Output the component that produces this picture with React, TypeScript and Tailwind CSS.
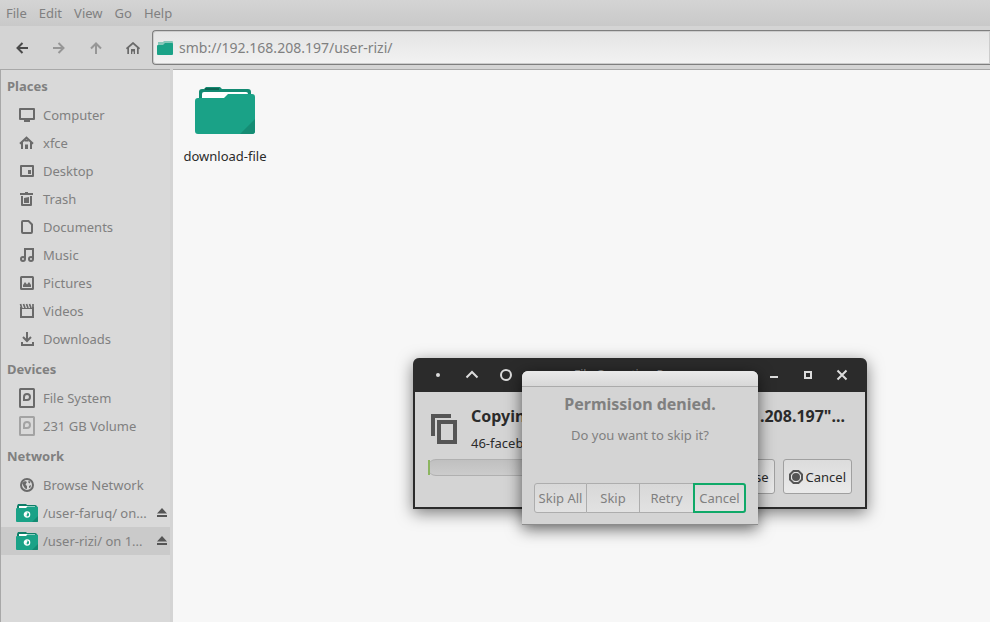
import type { ReactNode } from "react";

function Computer() {
  return (
    <svg width="16" height="16" viewBox="0 0 16 16" fill="currentColor" aria-hidden="true">
      <path fillRule="evenodd" d="M1 1h14a1 1 0 0 1 1 1v10a1 1 0 0 1-1 1H1a1 1 0 0 1-1-1V2a1 1 0 0 1 1-1zM2 3v8h12V3z" />
      <path d="M5 13h6v2H5z" />
    </svg>
  );
}
function Home() {
  return (
    <svg width="16" height="16" viewBox="0 0 16 16" aria-hidden="true">
      <path d="M1 8.700 7.500 2.600l6.500 6.100" fill="none" stroke="currentColor" strokeWidth="2" />
      <path d="M2 14V7h2v7zM11 14V7h2v7zM6 14V9.500h3V14zM5.500 4.500h4v2h-4z" fill="currentColor" />
    </svg>
  );
}
function Desktop() {
  return (
    <svg width="16" height="16" viewBox="0 0 16 16" fill="currentColor" aria-hidden="true">
      <path fillRule="evenodd" d="M2 2h12a1 1 0 0 1 1 1v10a1 1 0 0 1-1 1H2a1 1 0 0 1-1-1V3a1 1 0 0 1 1-1zM3 4v8h10V4z" />
      <path d="M9 7h3v4H9z" />
    </svg>
  );
}
function Trash() {
  return (
    <svg width="16" height="16" viewBox="0 0 16 16" fill="currentColor" aria-hidden="true">
      <path d="M6 1h3v1h5v2H1V2h5z" />
      <path fillRule="evenodd" d="M2 5h11v9a1 1 0 0 1-1 1H3a1 1 0 0 1-1-1zM4 5v8h7V5z" />
      <path d="M5 7l5-1v6H5z" />
    </svg>
  );
}
function Doc() {
  return (
    <svg width="16" height="16" viewBox="0 0 16 16" fill="none" stroke="currentColor" strokeWidth="2" aria-hidden="true">
      <path d="M4 2h5.500L13 5.500V13a1 1 0 0 1-1 1H4a1 1 0 0 1-1-1V3a1 1 0 0 1 1-1z" />
    </svg>
  );
}
function Music() {
  return (
    <svg width="16" height="16" viewBox="0 0 16 16" fill="none" stroke="currentColor" strokeWidth="2" aria-hidden="true">
      <path d="M6 12V2h8v10" />
      <circle cx="4" cy="12" r="2" />
      <circle cx="12" cy="12" r="2" />
    </svg>
  );
}
function Picture() {
  return (
    <svg width="16" height="16" viewBox="0 0 16 16" aria-hidden="true">
      <rect x="2" y="2" width="12" height="12" rx="0.500" fill="none" stroke="currentColor" strokeWidth="2" />
      <path d="M4 12V10l2-3 2 2.500L10 7l2 3v2z" fill="currentColor" />
    </svg>
  );
}
function Video() {
  return (
    <svg width="16" height="16" viewBox="0 0 16 16" aria-hidden="true">
      <path d="M2 4v10h12V4" fill="none" stroke="currentColor" strokeWidth="2" />
      <path d="M1 5h14v1H1z" fill="currentColor" />
      <path d="M1.500 1 3 6M4.500 1 6 5M7.500 1 9 5M10.500 1l1.500 4M14 1v5" stroke="currentColor" strokeWidth="1.700" />
    </svg>
  );
}
function Download() {
  return (
    <svg width="16" height="16" viewBox="0 0 16 16" fill="none" stroke="currentColor" strokeWidth="2" aria-hidden="true">
      <path d="M8 1v9M4 6l4 4 4-4M3 11v3h11v-3" />
    </svg>
  );
}
function Disk() {
  return (
    <svg width="16" height="20" viewBox="0 0 16 20" fill="none" stroke="currentColor" strokeWidth="2" aria-hidden="true">
      <rect x="1" y="1" width="14" height="18" rx="0.500" />
      <path d="M5 12V9a3 3 0 1 1 3 3z" />
    </svg>
  );
}
function Globe() {
  return (
    <svg width="16" height="16" viewBox="0 0 16 16" aria-hidden="true">
      <circle cx="8" cy="8" r="6" fill="none" stroke="currentColor" strokeWidth="2" />
      <path d="M3 6l3-2 2 1-1.500 2.500L8 9v3l-2-.500L4.500 9zM9.500 3.500l2 1.500-1 1.500-1.200-1zM10 9l2-1-.500 2.500-1.500.500z" fill="currentColor" />
    </svg>
  );
}
function NetFolder() {
  return (
    <svg width="22" height="18" viewBox="0 0 22 18" aria-hidden="true">
      <path d="M2 0h8l1 1h8a2 2 0 0 1 2 2v3H1V2z" fill="#0d7d67" />
      <path d="M3 2h16v3H3z" fill="#fff" />
      <path d="M0 5a1 1 0 0 1 1-1h9l1.500-1.500H21a1 1 0 0 1 1 1V17a1 1 0 0 1-1 1H1a1 1 0 0 1-1-1z" fill="#1aa287" />
      <path d="M22 12v5a1 1 0 0 1-1 1h-5z" fill="#138a72" />
      <circle cx="11" cy="10.500" r="2.700" fill="none" stroke="#fff" strokeWidth="1.200" />
      <path d="M8.500 9.500l2-1.500 1 1.500-1 1.500.500 2-1.500-.500z" fill="#fff" />
    </svg>
  );
}
function Eject() {
  return (
    <svg width="10" height="10" viewBox="0 0 10 10" fill="currentColor" aria-hidden="true">
      <path d="M5 0l5 5.500H0zM0 7h10v2H0z" />
    </svg>
  );
}

type Place = { label: string; icon: ReactNode; mounted?: boolean; selected?: boolean; faint?: boolean };

const groups: { title: string; items: Place[] }[] = [
  {
    title: "Places",
    items: [
      { label: "Computer", icon: <Computer /> },
      { label: "xfce", icon: <Home /> },
      { label: "Desktop", icon: <Desktop /> },
      { label: "Trash", icon: <Trash /> },
      { label: "Documents", icon: <Doc /> },
      { label: "Music", icon: <Music /> },
      { label: "Pictures", icon: <Picture /> },
      { label: "Videos", icon: <Video /> },
      { label: "Downloads", icon: <Download /> },
    ],
  },
  {
    title: "Devices",
    items: [
      { label: "File System", icon: <Disk /> },
      { label: "231 GB Volume", icon: <Disk />, faint: true },
    ],
  },
  {
    title: "Network",
    items: [
      { label: "Browse Network", icon: <Globe /> },
      { label: "/user-faruq/ on...", icon: <NetFolder />, mounted: true },
      { label: "/user-rizi/ on 1...", icon: <NetFolder />, mounted: true, selected: true },
    ],
  },
];

function Sidebar() {
  return (
    <nav className="w-[170px] shrink-0 border-l border-t border-[#a8a8a8] bg-[#d9d9d9]">
      {groups.map((g) => (
        <section key={g.title}>
          <h2 className="flex h-[31px] items-center pl-1.5 pt-px font-bold">{g.title}</h2>
          <ul>
            {g.items.map((p) => (
              <li key={p.label} className={p.selected ? "flex h-7 items-center bg-[#cacaca] pr-[3px]" : "flex h-7 items-center pr-[3px]"}>
                <button className="flex h-7 min-w-0 flex-1 items-center gap-[5px] whitespace-nowrap pl-[15px] text-left">
                  <span className={p.faint ? "flex w-[22px] justify-center text-[#a3a3a3]" : "flex w-[22px] justify-center text-[#6a6a6a]"}>
                    {p.icon}
                  </span>
                  <span>{p.label}</span>
                </button>
                {p.mounted && (
                  <button aria-label={"Eject " + p.label} className="text-[#555555]">
                    <Eject />
                  </button>
                )}
              </li>
            ))}
          </ul>
        </section>
      ))}
    </nav>
  );
}

function ToolButton({ label, className, children }: { label: string; className: string; children: ReactNode }) {
  return (
    <button aria-label={label} className={"flex w-[37px] items-center justify-center " + className}>
      {children}
    </button>
  );
}

function Toolbar() {
  return (
    <div className="flex h-[43px] items-stretch pb-1 pl-[3px] pt-1">
      <ToolButton label="Back" className="text-[#4a4a4a]">
        <svg width="12" height="12" viewBox="0 0 12 12" fill="none" stroke="currentColor" strokeWidth="2">
          <path d="M12 6H2M6.500 1 1.500 6l5 5" />
        </svg>
      </ToolButton>
      <ToolButton label="Forward" className="text-[#969696]">
        <svg width="12" height="12" viewBox="0 0 12 12" fill="none" stroke="currentColor" strokeWidth="2">
          <path d="M0 6h10M5.500 1l5 5-5 5" />
        </svg>
      </ToolButton>
      <ToolButton label="Up" className="text-[#969696]">
        <svg width="12" height="12" viewBox="0 0 12 12" fill="none" stroke="currentColor" strokeWidth="2">
          <path d="M6 12V2M1 6.500l5-5 5 5" />
        </svg>
      </ToolButton>
      <ToolButton label="Home" className="text-[#6a6a6a]">
        <svg width="14" height="12" viewBox="0 0 14 12" fill="currentColor">
          <path d="M.500 6.800 7 1l6.500 5.800" fill="none" stroke="currentColor" strokeWidth="1.700" />
          <path d="M1.300 6H3v6H1.300zM11 6h1.700v6H11zM5 12V7h4v5H7.700V9.500H6.300V12z" />
        </svg>
      </ToolButton>
      <label className="ml-px flex flex-1 items-center gap-1.5 rounded-l border border-r-0 border-[#7e7e7e] bg-linear-to-b from-[#e4e4e4] to-[#f2f2f2] pl-1 inset-ring inset-ring-[#cccccc]">
        <svg width="16" height="14" viewBox="0 0 16 14" aria-hidden="true">
          <path d="M1 1h5l1-1h8a1 1 0 0 1 1 1v3H1z" fill="#86c7b9" />
          <path d="M0 5a1 1 0 0 1 1-1h5l2-2h7a1 1 0 0 1 1 1v10a1 1 0 0 1-1 1H1a1 1 0 0 1-1-1z" fill="#1aa287" />
        </svg>
        <input aria-label="Location" defaultValue="smb://192.168.208.197/user-rizi/" className="min-w-0 flex-1 bg-transparent text-sm leading-5 outline-none" />
      </label>
    </div>
  );
}

function WinButton({ label, children }: { label: string; children: ReactNode }) {
  return (
    <button aria-label={label} className="flex w-[34px] items-center justify-center">
      <svg width="14" height="14" viewBox="0 0 14 14" fill="none" stroke="#dcdcdc" strokeWidth="2">
        {children}
      </svg>
    </button>
  );
}

function ProgressWindow() {
  return (
    <section
      aria-label="File Operation Progress"
      className="absolute left-[413px] top-[358px] w-[454px] rounded-t-md border-x-2 border-b-2 border-[#2b2b2b] bg-[#2b2b2b] text-[#2b2b2b] shadow-[0_4px_16px_rgba(0,0,0,0.5)]"
    >
      <header className="flex h-[34px] px-1.5">
        <WinButton label="Window menu"><circle cx="7" cy="7" r="2" fill="#dcdcdc" stroke="none" /></WinButton>
        <WinButton label="Shade"><path d="M1.500 9.500 7 4l5.500 5.500" /></WinButton>
        <WinButton label="Stick"><circle cx="7" cy="7" r="5" /></WinButton>
        <h2 className="flex-1 self-center text-center text-xs text-[#8a8a8a]">File Operation Progress</h2>
        <WinButton label="Minimize"><path d="M3 9h8" /></WinButton>
        <WinButton label="Maximize"><path d="M4 4h6v6H4z" /></WinButton>
        <WinButton label="Close"><path d="M2.500 2.500l9 9M11.500 2.500l-9 9" /></WinButton>
      </header>
      <div className="bg-[#d4d4d4] px-[13px] pb-[13px] pt-3">
        <div className="flex gap-3.5 pl-[3px] pr-[7px]">
          <svg width="26" height="30" viewBox="0 0 26 30" className="mt-2.5 shrink-0" fill="none" stroke="#555555" strokeWidth="4" aria-hidden="true">
            <path d="M20 2H2v20" />
            <path d="M8 8h16v20H8z" />
          </svg>
          <div className="flex min-w-0 flex-1 flex-col gap-[5px]">
            <h3 className="flex justify-between whitespace-nowrap text-base font-bold">
              <span>Copying</span>
              <span>.208.197"...</span>
            </h3>
            <p>46-facebook</p>
          </div>
        </div>
        <div className="mt-1.5 flex items-start gap-2">
          <div role="progressbar" aria-valuenow={1} aria-label="Copy progress" className="flex h-[17px] flex-1 rounded-lg border-y border-[#b0b0b0] bg-linear-to-b from-[#c0c0c0] to-[#cccccc]">
            <div className="w-0.5 bg-[#8cb560]" />
          </div>
          <button className="flex h-[35px] items-center gap-[3px] rounded-[3px] border border-[#a0a0a0] bg-linear-to-b from-[#dcdcdc] to-[#eaeaea] px-[5px]">
            <svg width="14" height="14" viewBox="0 0 14 14" fill="#555555" aria-hidden="true"><path d="M3 2h3v10H3zM8 2h3v10H8z" /></svg>
            <span>Pause</span>
          </button>
          <button className="flex h-[35px] items-center gap-[3px] rounded-[3px] border border-[#a0a0a0] bg-linear-to-b from-[#dcdcdc] to-[#eaeaea] px-[5px]">
            <svg width="14" height="14" viewBox="0 0 14 14" aria-hidden="true">
              <path d="M4.500 1h5L13 4.500v5L9.500 13h-5L1 9.500v-5z" fill="none" stroke="#555555" strokeWidth="2" />
              <circle cx="7" cy="7" r="4" fill="#555555" />
            </svg>
            <span>Cancel</span>
          </button>
        </div>
      </div>
    </section>
  );
}

function PermissionDialog() {
  return (
    <section
      role="dialog"
      aria-labelledby="denied"
      className="absolute left-[522px] top-[371px] w-[236px] rounded-t-md border-b border-[#8c8c8c] bg-[#d4d4d4] text-center shadow-[0_4px_16px_rgba(0,0,0,0.6)]"
    >
      <div className="h-4 rounded-t-md border-b border-[#ababab] bg-linear-to-b from-[#e9e9e9] to-[#d8d8d8]" />
      <div className="px-3 pb-[11px] pt-[5px]">
        <h2 id="denied" className="text-base font-bold">Permission denied.</h2>
        <p className="mt-[9px]">Do you want to skip it?</p>
        <div className="mt-[38px] grid grid-cols-4">
          <button className="h-[30px] whitespace-nowrap rounded-l-[3px] border border-[#adadad] bg-linear-to-b from-[#d8d8d8] to-[#e2e2e2]">Skip All</button>
          <button className="h-[30px] border-y border-r border-[#adadad] bg-linear-to-b from-[#d8d8d8] to-[#e2e2e2]">Skip</button>
          <button className="h-[30px] border-y border-[#adadad] bg-linear-to-b from-[#d8d8d8] to-[#e2e2e2]">Retry</button>
          <button className="h-[30px] rounded-r-[3px] border-2 border-[#0fa968] bg-linear-to-b from-[#d8d8d8] to-[#e2e2e2]">Cancel</button>
        </div>
      </div>
    </section>
  );
}

export default function App() {
  return (
    <div className="relative flex min-h-screen flex-col overflow-hidden bg-[#d4d4d4] font-['Noto_Sans',sans-serif] text-[13px] leading-5 text-[#808080]">
      <div role="menubar" className="flex h-[26px] items-center gap-3 bg-linear-to-b from-[#d4d4d4] to-[#c9c9c9] pl-1.5">
        {["File", "Edit", "View", "Go", "Help"].map((m) => (
          <button key={m} role="menuitem">{m}</button>
        ))}
      </div>
      <Toolbar />
      <div className="flex flex-1 gap-[3px]">
        <Sidebar />
        <main className="flex-1 border-t border-[#a8a8a8] bg-[#f7f7f7] text-[#2b2b2b]">
          <button className="mt-[17px] flex w-[104px] flex-col items-center gap-[11px]">
            <svg width="60" height="48" viewBox="0 0 60 48" aria-hidden="true">
              <path d="M4 5a3 3 0 0 1 3-3h2l2-2h14l2 2h26a3 3 0 0 1 3 3v6H4z" fill="#138a72" />
              <path d="M10 1h14v2H10z" fill="#0c6553" />
              <path d="M7 7a2 2 0 0 1 2-2h42a2 2 0 0 1 2 2v4H7z" fill="#fff" />
              <path d="M0 14a3 3 0 0 1 3-3h26l4-4h24a3 3 0 0 1 3 3v34a3 3 0 0 1-3 3H3a3 3 0 0 1-3-3z" fill="#1aa287" />
              <path d="M60 32v12a3 3 0 0 1-3 3H45z" fill="#158c74" />
            </svg>
            <span>download-file</span>
          </button>
        </main>
      </div>
      <ProgressWindow />
      <PermissionDialog />
    </div>
  );
}
